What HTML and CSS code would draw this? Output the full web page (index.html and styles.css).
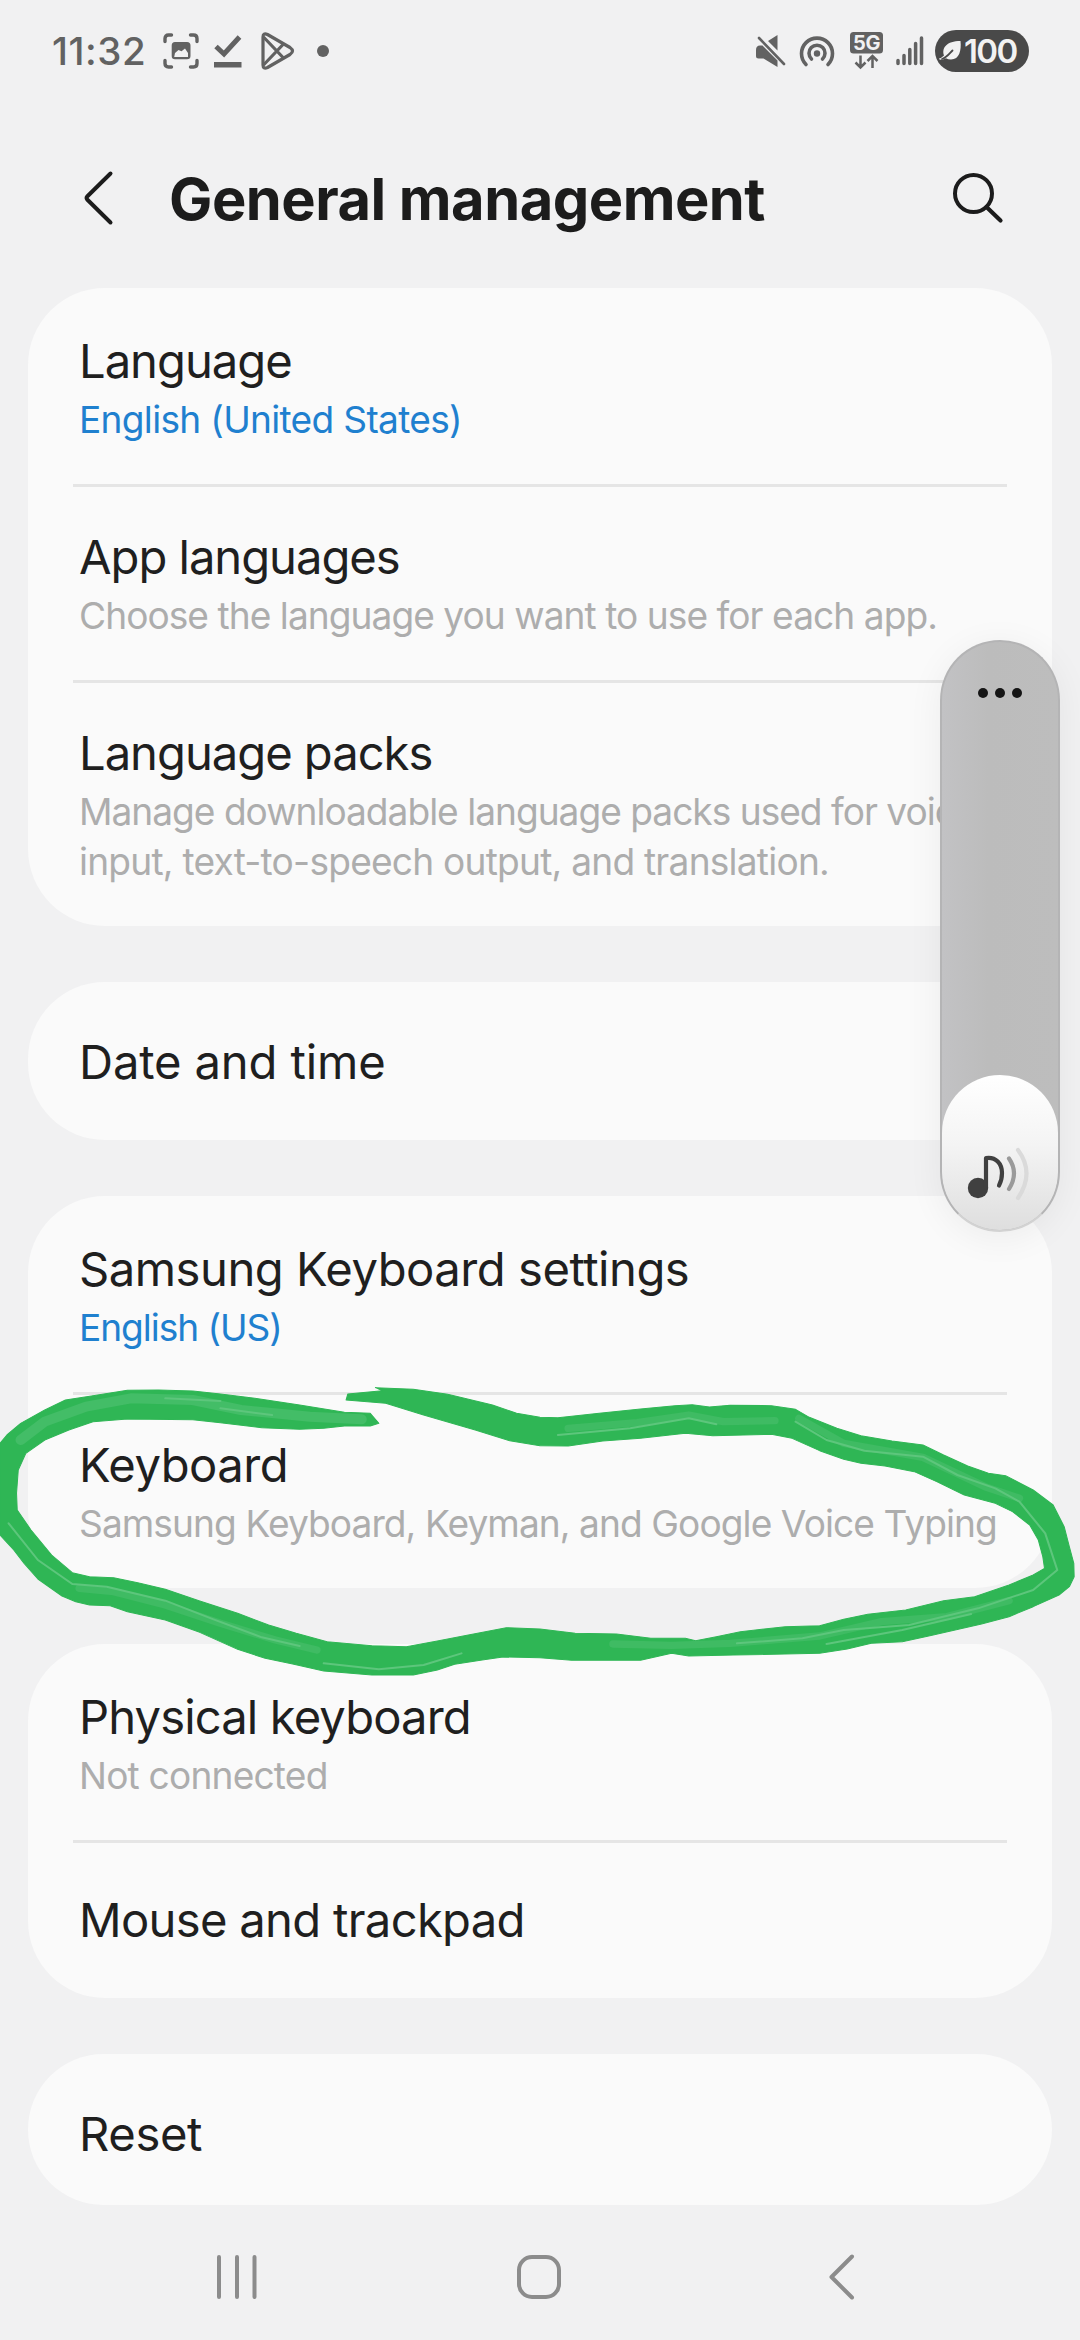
FILE: index.html
```
<!DOCTYPE html>
<html lang="en">
<head>
<meta charset="utf-8">
<title>General management</title>
<link rel="stylesheet" href="styles.css">
</head>
<body>
<div class="screen">
  <div class="status">
    <span class="clock">11:32</span>
    <svg class="ic-capture" width="36" height="36" viewBox="0 0 36 36">
      <g fill="none" stroke="#626262" stroke-width="3.4" stroke-linecap="round">
        <path d="M2 8.500V5.500Q2 2 5.500 2H8.500M27.500 2H30.500Q34 2 34 5.500V8.500M34 27.500V30.500Q34 34 30.500 34H27.500M8.500 34H5.500Q2 34 2 30.500V27.500"/>
      </g>
      <path fill="#626262" fill-rule="evenodd" d="M12 9H24Q27.500 9 27.500 12.500V23Q27.500 26.300 24 26.300H12Q8.700 26.300 8.700 23V12.500Q8.700 9 12 9ZM11.200 24H25V20L22 15.500L18.500 18.200L15.500 17L12 20Z"/>
    </svg>
    <svg class="ic-done" width="28" height="34" viewBox="0 0 28 34">
      <path d="M2 12.500L10 20L25.500 3" fill="none" stroke="#626262" stroke-width="5"/>
      <rect x="0" y="28" width="27.500" height="5.500" fill="#626262"/>
    </svg>
    <svg class="ic-play" width="34" height="38" viewBox="0 0 34 38">
      <g fill="none" stroke="#626262" stroke-width="3.200" stroke-linejoin="round">
        <path d="M2 5Q2 0.500 6.500 2.500L29 15.500Q34 19 29 22.500L6.500 35.500Q2 37.500 2 33Z"/>
        <path d="M2.500 5L22.500 26M2.500 33L22.500 12"/>
      </g>
    </svg>
    <span class="more-dot"></span>
    <div class="status-right">
      <svg width="30" height="32" viewBox="0 0 30 32">
        <path fill="#626262" d="M0 15V21Q0 23.500 2.500 23.500H7.500L21.500 32V25.500L6.500 10.500H4Q0 10.500 0 15ZM12 6L21.500 0V15.500Z"/>
        <path d="M3 3L28 29" stroke="#626262" stroke-width="2.600" stroke-linecap="round"/>
      </svg>
      <svg class="ic-hotspot" width="36" height="34" viewBox="0 0 36 34">
        <g fill="none" stroke="#626262" stroke-width="3.600" stroke-linecap="round">
          <path d="M7 30.500A15.500 15.500 0 1 1 29 30.500"/>
          <path d="M12.500 25A8 8 0 1 1 23.500 25"/>
        </g>
        <circle cx="18" cy="19.500" r="3.200" fill="#626262"/>
      </svg>
      <svg class="ic-5g" width="33" height="38" viewBox="0 0 33 38">
        <rect width="33" height="21.500" rx="3.500" fill="#626262"/>
        <text class="net" x="16.500" y="18" text-anchor="middle">5G</text>
        <path d="M10.500 23.500V35M5.500 30.500L10.500 35.500L15.500 30.500M22.500 36V24M17.500 29L22.500 24L27.500 29" fill="none" stroke="#626262" stroke-width="2.500"/>
      </svg>
      <svg class="ic-signal" width="28" height="30" viewBox="0 0 28 30">
        <path d="M2 24.500V27.500M8 19.500V27.500M13.800 13.500V27.500M19.600 7.500V27.500M25.500 2V27.500" stroke="#626262" stroke-width="3.500" stroke-linecap="round"/>
      </svg>
      <div class="battery">
        <svg width="23" height="22" viewBox="0 0 23 22">
          <path fill="#f2f2f2" d="M21.500 1C22.500 10 20.500 19.500 12 19.500Q9 19.500 7 18.200L4 19.500Q0 20.500 0 18.500Q2.500 18 5 15.500C2.500 8 7.500 1 21.500 1Z"/>
          <path d="M3 19C8 17.500 10 14 13.500 10.500" fill="none" stroke="#494949" stroke-width="1.800" stroke-linecap="round"/>
        </svg>
        <span class="level">100</span>
      </div>
    </div>
  </div>

  <div class="header">
    <svg width="30" height="54" viewBox="0 0 30 54">
      <path d="M26.500 2.500L3.200 25.500Q2 27 3.200 28.500L26.500 51.500" fill="none" stroke="#1c1c1c" stroke-width="4" stroke-linecap="round" stroke-linejoin="round"/>
    </svg>
    <h1>General management</h1>
    <svg class="search" width="52" height="52" viewBox="0 0 52 52">
      <circle cx="21.500" cy="21.500" r="18.500" fill="none" stroke="#1c1c1c" stroke-width="4"/>
      <path d="M34.500 35L48.500 48.500" stroke="#1c1c1c" stroke-width="4.200" stroke-linecap="round"/>
    </svg>
  </div>

  <div class="list">
    <div class="card">
      <div class="row"><div class="title tight">Language</div><div class="desc link">English (United States)</div></div>
      <div class="row"><div class="title tight">App languages</div><div class="desc choose">Choose the language you want to use for each app.</div></div>
      <div class="row tall"><div class="title tight">Language packs</div><div class="desc packs"><span class="lead">Manage downloadable language packs used for voice</span><br>input, text-to-speech output, and translation.</div></div>
    </div>
    <div class="card">
      <div class="row single"><div class="title wide">Date and time</div></div>
    </div>
    <div class="card">
      <div class="row"><div class="title">Samsung Keyboard settings</div><div class="desc link tight">English (US)</div></div>
      <div class="row"><div class="title">Keyboard</div><div class="desc inputs">Samsung Keyboard, Keyman, and Google Voice Typing</div></div>
    </div>
    <div class="card">
      <div class="row"><div class="title snug">Physical keyboard</div><div class="desc">Not connected</div></div>
      <div class="row single"><div class="title mouse">Mouse and trackpad</div></div>
    </div>
    <div class="card">
      <div class="row single last"><div class="title reset">Reset</div></div>
    </div>
  </div>

  <div class="nav">
    <svg width="44" height="46" viewBox="0 0 44 46">
      <path d="M4 3V43M22 3V43M39.500 3V43" stroke="#8c8c8c" stroke-width="4" stroke-linecap="round"/>
    </svg>
    <svg width="46" height="46" viewBox="0 0 46 46">
      <rect x="3" y="3" width="40" height="40" rx="13" fill="none" stroke="#8c8c8c" stroke-width="4"/>
    </svg>
    <svg width="28" height="48" viewBox="0 0 28 48">
      <path d="M24 3.500L3.500 24L24 44.500" fill="none" stroke="#8c8c8c" stroke-width="4" stroke-linecap="round" stroke-linejoin="round"/>
    </svg>
  </div>

  <svg class="marker" viewBox="0 0 3136 1500" preserveAspectRatio="none">
    <path fill="#2fb655" stroke="#2fb655" stroke-width="3" stroke-linejoin="round" d="M1100 730L1075 700L1000 697L870 675L740 655L640 642L560 633L460 630L370 631L270 647L190 660L130 690L60 730L20 765L0 790V1065L40 1110L70 1150L110 1197L180 1248L220 1265L260 1275L320 1277L370 1295L480 1320L580 1357L690 1408L770 1435L850 1452L940 1473L1080 1485L1200 1485L1270 1470L1320 1453L1400 1440L1460 1431L1568 1433L1660 1441L1860 1441L1950 1420L2000 1428L2130 1425L2380 1420L2460 1407L2530 1390L2620 1385L2700 1367L2850 1332L2930 1310L3000 1280L3075 1245L3105 1220L3119 1190L3118 1150L3105 1100L3090 1040L3058 975L3000 930L2920 887L2870 880L2810 858L2740 825L2680 795L2590 783L2500 767L2430 745L2350 712L2310 688L2240 677L2120 676L2060 681L2010 674L1960 677L1860 687L1740 700L1620 713L1568 712L1500 700L1430 675L1300 643L1200 628L1090 623L1110 632L1010 642L1005 660L1120 670L1230 705L1380 750L1480 782L1568 797L1650 798L1750 783L1860 775L1990 760L2070 767L2240 763L2300 775L2380 812L2450 838L2500 850L2570 858L2655 875L2720 905L2800 945L2890 970L2940 995L2990 1035L3015 1080L3028 1130L3033 1165L3000 1185L2930 1215L2830 1250L2740 1262L2630 1290L2520 1303L2450 1318L2380 1337L2280 1340L2150 1355L2080 1370L2020 1382L1990 1375L1890 1375L1790 1362L1670 1360L1568 1347L1470 1343L1360 1365L1270 1383L1180 1400L1080 1397L950 1385L860 1360L780 1335L690 1300L580 1263L480 1228L400 1208L330 1193L260 1190L210 1178L150 1125L90 1050L50 990L48 940L53 870L75 820L130 780L200 750L270 725L370 717L560 719L640 728L760 743L870 748L940 745L1000 738L1075 738Z"/>
    <g fill="none" stroke-linecap="round" stroke-linejoin="round">
      <path stroke="#43bd67" stroke-width="30" d="M1050 718L900 710L700 690L560 660L380 655L250 680L130 725L60 780"/>
      <path stroke="#3fbb63" stroke-width="22" d="M230 1225L330 1235L480 1275L640 1330L800 1380L920 1410M1780 1392L1950 1396L2120 1390L2380 1368L2560 1325L2750 1310L2930 1262M2320 715L2450 790L2680 832L2860 920L2960 955M1650 745L1850 728L2000 705L2100 725L2250 722"/>
      <path stroke="#5dc67c" stroke-width="6" d="M480 655L640 663M640 685L790 705M25 1030L110 1140L210 1212L310 1220L480 1262L620 1318L760 1372L870 1398M940 1450L1100 1468L1230 1455L1340 1420M1620 765L1830 745L2000 715L2080 733M2310 725L2400 780L2510 812L2680 830L2780 885L2890 925L2960 965L3035 1060L3070 1170L3000 1230L2840 1285L2640 1335L2450 1350L2330 1375L2140 1390M2400 1392L2620 1350L2820 1302"/>
    </g>
  </svg>

  <div class="volume">
    <div class="dots"><i></i><i></i><i></i></div>
    <div class="fill">
      <svg width="56" height="56" viewBox="0 0 56 56">
        <circle cx="14" cy="44" r="10.200" fill="#404040"/>
        <g fill="none" stroke-width="4.200" stroke-linecap="round" stroke-linejoin="round">
          <path stroke="#404040" d="M22 44V14C32 12.500 38 20 38 29Q38 36 35 41.500"/>
          <path stroke="#9a9a9a" d="M45 14.500Q55 29 45 45"/>
          <path stroke="#dadada" d="M54 6Q71 29 54 54"/>
        </g>
      </svg>
    </div>
  </div>
</div>
</body>
</html>
```
FILE: styles.css
```
* { box-sizing: border-box; }
body {
  margin: 0;
  font-family: Inter, Roboto, "Noto Sans", sans-serif;
  background: #f1f1f2;
  color: #1f1f1f;
}
.screen {
  position: relative;
  width: 1080px;
  height: 2340px;
  overflow: hidden;
  display: flex;
  flex-direction: column;
}
svg { display: block; flex: none; overflow: visible; }

.status {
  height: 102px;
  padding: 0 51px 0 52px;
  display: flex;
  align-items: center;
}
.clock {
  width: 111px;
  font-size: 38.5px;
  font-weight: 500;
  letter-spacing: 0.56px;
  color: #626262;
}
.ic-done { margin-left: 15px; }
.ic-play { margin-left: 19px; }
.more-dot {
  width: 12px;
  height: 12px;
  margin-left: 22px;
  border-radius: 50%;
  background: #626262;
}
.status-right {
  margin-left: auto;
  display: flex;
  align-items: center;
}
.ic-hotspot { margin-left: 13px; }
.ic-5g { margin-left: 15px; }
.ic-signal { margin-left: 13px; }
.net { font-size: 20px; font-weight: 700; fill: #f1f1f2; letter-spacing: -0.5px; }
.battery {
  width: 94px;
  height: 42px;
  margin-left: 11px;
  padding-left: 4px;
  border-radius: 21px;
  background: #494949;
  display: flex;
  align-items: center;
}
.level {
  margin-left: 2px;
  font-size: 33px;
  font-weight: 600;
  letter-spacing: -1.6px;
  color: #f2f2f2;
}

.header {
  height: 186px;
  padding: 8px 76px 0 84px;
  display: flex;
  align-items: center;
}
.header > svg { margin-bottom: 3px; }
h1 {
  margin: 0 0 0 55px;
  font-size: 57.8px;
  line-height: 80px;
  font-weight: 700;
  letter-spacing: -0.5px;
  color: #1c1c1c;
}
.search { margin-left: auto; }

.list {
  padding: 0 28px;
  display: flex;
  flex-direction: column;
  gap: 56px;
}
.card { padding: 0 45px; border-radius: 77px; background: #fafafa; }
.row { height: 196px; padding: 43px 6px 0; white-space: nowrap; }
.row.tall { height: 246px; }
.row.single { height: 158px; padding-top: 50px; }
.row.last { height: 151px; }
.row + .row { border-top: 3px solid #e5e5e5; padding-top: 40px; }
.row + .row.single { padding-top: 47px; }
.title { font-size: 47.2px; line-height: 60px; letter-spacing: -0.5px; }
.title.tight { letter-spacing: -1.03px; }
.title.snug { letter-spacing: -0.9px; }
.title.mouse { letter-spacing: -0.7px; }
.title.wide { letter-spacing: -0.16px; }
.title.reset { letter-spacing: -0.4px; }
.desc {
  margin-top: 4px;
  font-size: 37.1px;
  line-height: 50px;
  letter-spacing: -0.79px;
  color: #adadad;
}
.desc.link { color: #1f80cf; letter-spacing: -0.69px; }
.desc.link.tight { letter-spacing: -1.04px; }
.desc.choose { letter-spacing: -0.94px; }
.desc.packs { letter-spacing: -0.76px; }
.lead { letter-spacing: -0.99px; }
.desc.inputs { letter-spacing: -0.91px; }

.nav {
  flex: 1;
  padding: 9px 0 0 215px;
  display: flex;
  align-items: center;
  gap: 257px;
}
.nav svg:last-child { margin-left: 9px; }

.marker {
  position: absolute;
  left: 0;
  top: 1180px;
  width: 1080px;
  height: 500px;
}

.volume {
  position: absolute;
  left: 940px;
  top: 640px;
  width: 120px;
  height: 592px;
  border: 2px solid #b4b4b5;
  border-bottom-color: #d2d2d2;
  border-radius: 60px;
  background: linear-gradient(90deg, #c2c2c4, #bcbcbc 40%, #bdbdbd);
  box-shadow: 0 6px 36px rgba(0, 0, 0, 0.06);
  overflow: hidden;
  display: flex;
  flex-direction: column;
  justify-content: space-between;
}
.dots { padding-top: 46px; display: flex; justify-content: center; gap: 7px; }
.dots i { width: 10px; height: 10px; border-radius: 50%; background: #151515; }
.fill {
  height: 155px;
  padding: 69px 0 0 22px;
  border-radius: 59px 59px 58px 58px;
  background: linear-gradient(#ffffff, #f4f4f4 45%, #dedede);
}
```
